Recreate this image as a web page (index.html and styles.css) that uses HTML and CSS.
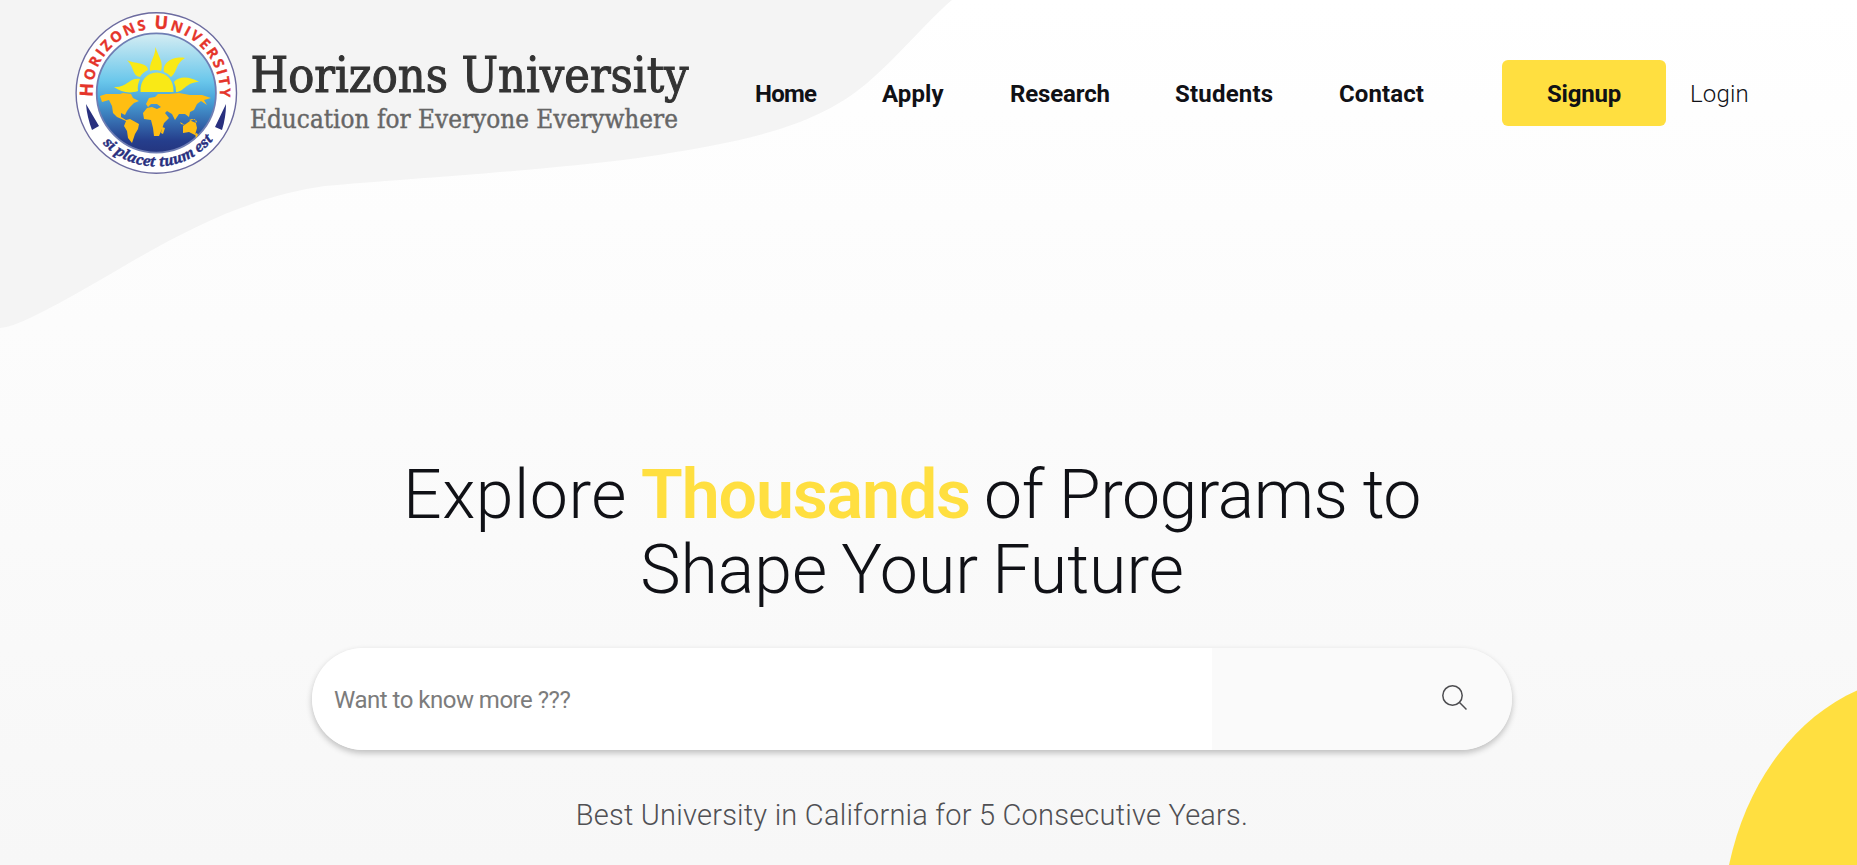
FILE: index.html
```html
<!DOCTYPE html>
<html lang="en">
<head>
<meta charset="utf-8">
<title>Horizons University</title>
<link rel="stylesheet" href="styles.css">
</head>
<body>
<div class="page">
  <svg class="backdrop" viewBox="0 0 1857 865" aria-hidden="true">
    <path fill="#f4f4f4" d="M0 0H952C930 18 903 52 866 84C815 126 752 141 638 158C540 171 400 179 325 186C205 203 120 275 32 317Q12 327 0 328Z"/>
    <path fill="#ffdf40" d="M1857 690.5C1797 717 1747 780 1729 865H1857Z"/>
  </svg>
  <header class="header">
    <a class="brand">
      <svg class="logo" width="650" height="186" viewBox="45 0 650 186">
        <defs>
          <linearGradient id="sky" x1="0" y1="0" x2="0" y2="1">
            <stop offset="0" stop-color="#d5edf3"/><stop offset=".4" stop-color="#6ac7eb"/><stop offset=".55" stop-color="#4aa5da"/><stop offset=".9" stop-color="#253e8c"/><stop offset="1" stop-color="#24357f"/>
          </linearGradient>
          <path id="arcTop" d="M92.900 97A63.600 63.600 0 1 1 219.200 102"/>
          <path id="arcBottom" d="M102.300 143.200A74 74 0 0 0 213 140"/>
        </defs>
        <circle cx="156.3" cy="93" r="80.2" fill="#fff" stroke="#6c6b9f" stroke-width="1.4"/>
        <circle cx="156.3" cy="93" r="59.6" fill="url(#sky)" stroke="#6f7eb4" stroke-width="1.8"/>
        <path fill="#f9e916" d="M140.500 92C140 80 147 73 156.500 72.500C167 73 174 80 173.500 92ZM150 71C149 62 155 58 155.500 47C158 56 164 62 161 71Q155 69 150 71ZM148 70Q142 73 140 77C132 76 135 68 127 60C134 64 148 62 148 70ZM164 72Q168 73 171 77C178 71 175 64 185 58C174 56 162 62 164 72ZM174 82Q176 86 176 92C184 92 186 82 199 82C190 76 178 76 174 82ZM140 79Q137 85 138 91C129 94 121 92 114 87C127 88 129 77 140 79Z"/>
        <path fill="#ffbe12" d="M100 96L106 94 120 94 123 93 131 94 133 98 139 101 134 103 130 107 127 111 125 115 121 113 121 117 126 120 130 119 139 124 138 129 135 134 132 143 128 138 127 131 124 126 126 121 117 117 113 113 112 106 109 100 102 102Z"/>
        <path fill="#ffbe12" d="M146 104L149 98 155 97 158 94 169 94 179 93 190 95 202 95 211 98 204 100 207 105 201 101 197 104 194 110 190 112 189 117 185 114 179 114 175 120 172 114 167 111 165 113 169 118 164 123 162 129 159 136 154 136 153 128 151 120 144 119 143 113 147 108 152 107 157 109 161 107 157 104 151 104 148 107Z"/>
        <path fill="#ffbe12" d="M183 126L190 121 195 119 197 128 195 135 189 132 183 133ZM177 116L180 122 185 125 181 124ZM162 127l3 1-2 6-2-1ZM195 134l2-1 1 2-2 3ZM189 120l7 3 1-2-5-2Z"/>
        <path fill="#29307f" d="M86 104L99 126 92 130Q87 117 86 104ZM226 104L215 127 222 130Q226 117 226 104Z"/>
        <text class="seal-name"><textPath href="#arcTop"><tspan class="cap">H</tspan>ORIZONS <tspan class="cap">U</tspan>NIVERSITY</textPath></text>
        <text class="seal-motto"><textPath href="#arcBottom">si placet tuum est</textPath></text>
        <text class="brand-name" x="250.500" y="91.700" textLength="438" lengthAdjust="spacingAndGlyphs">Horizons University</text>
        <text class="brand-tag" x="250" y="127.500" textLength="428" lengthAdjust="spacingAndGlyphs">Education for Everyone Everywhere</text>
      </svg>
    </a>
    <nav class="nav">
      <a class="home">Home</a><a class="apply">Apply</a><a class="research">Research</a><a class="students">Students</a><a class="contact">Contact</a>
    </nav>
    <a class="signup">Signup</a>
    <a class="login">Login</a>
  </header>
  <main class="hero">
    <h1 class="headline"><span class="line"><span class="lead">Explore</span> <b>Thousands</b> <span class="rest">of Programs to</span></span><span class="line">Shape Your Future</span></h1>
    <form class="search">
      <input class="query" type="text" placeholder="Want to know more ???">
      <button class="go" type="button" aria-label="Search">
        <svg width="28" height="28" viewBox="0 0 28 28" fill="none" stroke="#4d4d50" stroke-width="1.500"><circle cx="12.500" cy="12.500" r="9.700"/><path d="M19.300 19.300L26.500 26.500"/></svg>
      </button>
    </form>
    <p class="tagline">Best University in California for 5 Consecutive Years.</p>
  </main>
</div>
</body>
</html>
```
FILE: styles.css
```css
* { box-sizing: border-box; }
body { margin: 0; font-family: Roboto, sans-serif; color: #101116; }
.page {
  position: relative;
  height: 865px;
  overflow: hidden;
  background: linear-gradient(#fff, #f7f7f7);
}
.backdrop { position: absolute; inset: 0; width: 1857px; height: 865px; }
.header { position: relative; display: flex; align-items: center; height: 186px; padding-left: 45px; }
.brand { width: 710px; height: 186px; flex: none; }
.logo { display: block; overflow: visible; }
.seal-name { font: 700 14.5px "Open Sans", sans-serif; letter-spacing: 2.1px; fill: #e5352b; stroke: #e5352b; stroke-width: .3px; }
.seal-name .cap { font-size: 18px; }
.seal-motto { font: italic 700 14px "Noto Serif", "DejaVu Serif Condensed", "DejaVu Serif", serif; letter-spacing: 0; fill: #29307f; stroke: #29307f; stroke-width: .4px; }
.brand-name { font: 48px "DejaVu Serif Condensed", "DejaVu Serif", serif; fill: #333; stroke: #333; stroke-width: 1px; }
.brand-tag { font: 26.5px "DejaVu Serif Condensed", "DejaVu Serif", serif; fill: #666; stroke: #666; stroke-width: .4px; }
.nav {
  display: grid;
  grid-template-columns: 127px 128px 165px 164px 163px;
  flex: none;
  padding-top: 2px;
  font-size: 24px;
  line-height: 30px;
  font-weight: 700;
  white-space: nowrap;
}
.home { letter-spacing: -.8px; }
.apply { letter-spacing: .1px; }
.research { letter-spacing: -.15px; }
.students { letter-spacing: .2px; }
.contact { letter-spacing: .1px; }
.signup {
  width: 164px;
  height: 66px;
  border-radius: 6px;
  background: #ffdf40;
  font-size: 24px;
  line-height: 68px;
  font-weight: 700;
  text-align: center;
  letter-spacing: -.2px;
}
.login { margin-left: 24px; padding-top: 2px; font-size: 24px; font-weight: 300; letter-spacing: .2px; }
.hero { position: relative; display: flex; flex-direction: column; align-items: center; width: 1824px; padding-top: 272px; }
.headline { margin: 0; font-size: 68px; line-height: 75px; font-weight: 300; text-align: center; white-space: nowrap; }
.headline b { font-weight: 600; color: #ffdf40; letter-spacing: -1.1px; }
.line { display: block; letter-spacing: 0; word-spacing: -2.5px; }
.lead { letter-spacing: .5px; }
.rest { letter-spacing: -.5px; word-spacing: -1px; }
.search {
  display: flex;
  width: 1200px;
  height: 102px;
  margin-top: 40px;
  border-radius: 51px;
  overflow: hidden;
  background: #fafafa;
  box-shadow: 0 3px 6px rgba(0, 0, 0, .24);
}
.query { width: 900px; border: 0; outline: 0; padding: 2px 22px 0; background: #fff; font: 400 24px Roboto, sans-serif; letter-spacing: -.5px; }
.query::placeholder { color: #7c7c7c; opacity: 1; }
.go { display: flex; align-items: center; justify-content: flex-end; flex: 1; border: 0; padding: 0 44px 4px 0; background: #fafafa; }
.tagline { margin: 47px 0 0; font-size: 29px; line-height: 36px; font-weight: 300; letter-spacing: .22px; color: #505054; white-space: nowrap; }
```
